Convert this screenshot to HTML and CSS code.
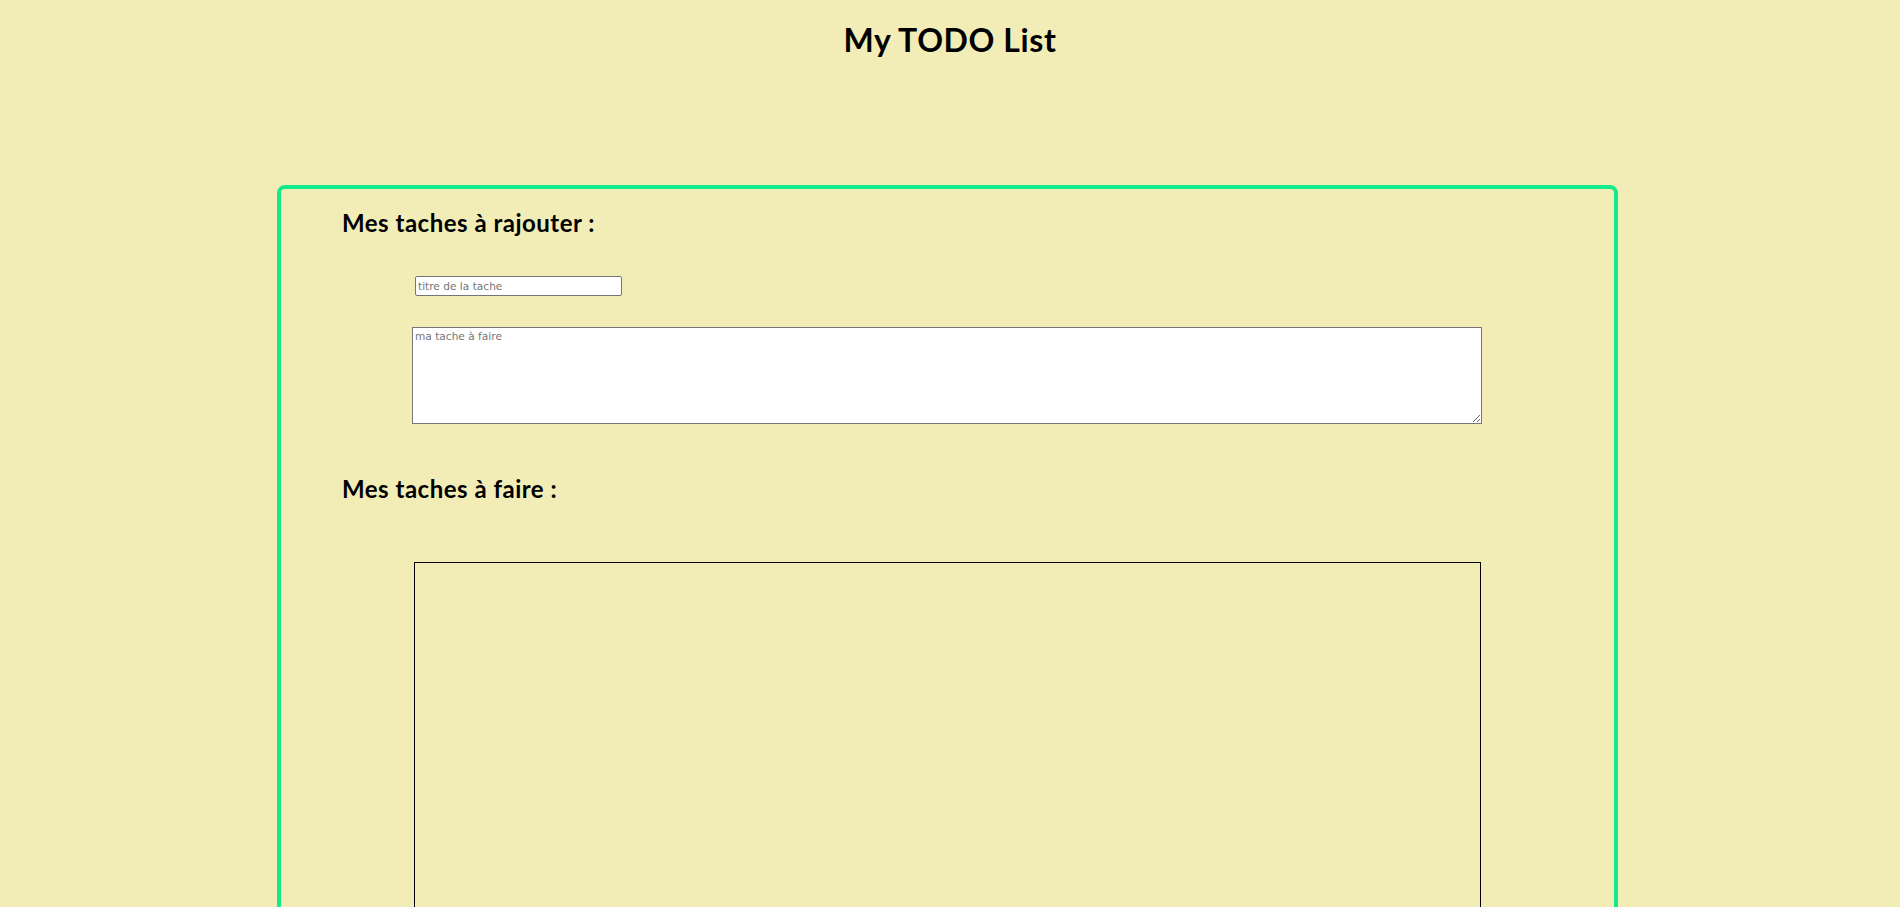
FILE: index.html
```html
<!DOCTYPE html>
<html lang="fr">
<head>
<meta charset="utf-8">
<title>My TODO List</title>
<link rel="stylesheet" href="styles.css">
</head>
<body>
<h1 class="title">My TODO List</h1>
<main class="card">
  <h2 class="section-title">Mes taches à rajouter :</h2>
  <form class="add-form">
    <input class="task-title" type="text" placeholder="titre de la tache">
    <textarea class="task-body" placeholder="ma tache à faire"></textarea>
  </form>
  <h2 class="section-title section-title--list">Mes taches à faire :</h2>
  <div class="task-list"></div>
</main>
</body>
</html>
```
FILE: styles.css
```css
html {
  overflow: hidden;
}
body {
  margin: 8px;
  background: #f2edb7;
  font-family: Lato, "Open Sans", sans-serif;
  color: #000;
}
.title {
  margin: 13px 0 0;
  height: 37px;
  line-height: 37px;
  font-size: 32px;
  font-weight: 700;
  text-align: center;
  letter-spacing: 0.6px;
}
.card {
  margin: 127px 0 0 269px;
  width: 1272px;
  padding: 0 0 0 61px;
  border: 4px solid #12ea8c;
  border-radius: 8px;
  display: flex;
  flex-direction: column;
  align-items: flex-start;
}
.section-title {
  margin: 20px 0 0;
  height: 28px;
  line-height: 28px;
  font-size: 24px;
  font-weight: 700;
  letter-spacing: 0.5px;
}
.section-title--list {
  margin-top: 51px;
}
.add-form {
  display: flex;
  flex-direction: column;
  align-items: flex-start;
}
.task-title {
  margin: 39px 0 0 73px;
  width: 207px;
  height: 20px;
  box-sizing: border-box;
  padding: 1px 2px;
  border: 1px solid #767676;
  border-radius: 2px;
  background: #fff;
  font-family: "DejaVu Sans", sans-serif;
  font-size: 10.6px;
}
.task-body {
  margin: 31px 0 0 70px;
  width: 1070px;
  height: 97px;
  box-sizing: border-box;
  padding: 2px;
  border: 1px solid #767676;
  border-radius: 0;
  background: #fff;
  font-family: "DejaVu Sans", sans-serif;
  font-size: 10.6px;
}
.task-title::placeholder,
.task-body::placeholder {
  color: #757575;
}
.task-list {
  margin: 59px 0 0 72px;
  width: 1067px;
  height: 600px;
  box-sizing: border-box;
  border: 1px solid #000;
}
```
